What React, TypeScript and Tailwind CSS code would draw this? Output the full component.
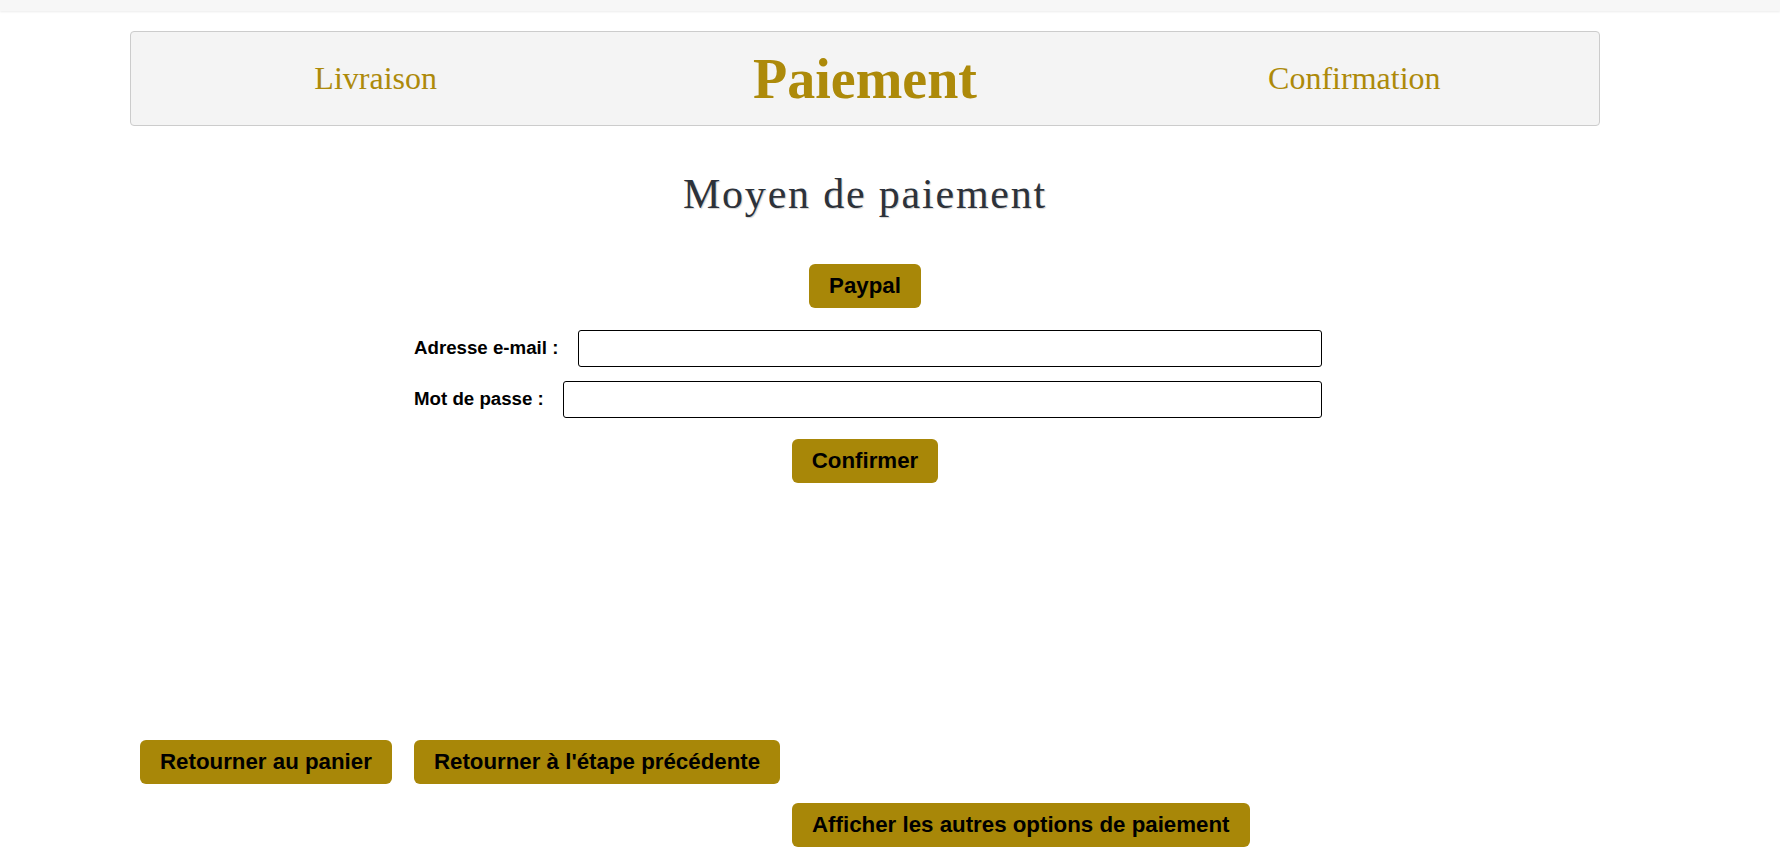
import React from "react";

const steps = [
  { label: "Livraison", active: false },
  { label: "Paiement", active: true },
  { label: "Confirmation", active: false },
];

function GoldButton({ children, className = "" }: { children: React.ReactNode; className?: string }) {
  return (
    <button
      type="button"
      className={`rounded-[6px] bg-[#a88708] px-[20px] py-[9px] text-[22.3px] leading-[26px] font-bold text-black font-['Liberation_Sans',Arial,sans-serif] ${className}`}
    >
      {children}
    </button>
  );
}

export default function App() {
  return (
    <div className="min-h-screen bg-white">
      {/* Top strip */}
      <div className="h-[11px] bg-[#f7f7f7] shadow-[0_1px_2px_rgba(0,0,0,0.08)]" />

      <div className="ml-[130px] w-[1470px]">
        {/* Stepper */}
        <div className="mt-[20px] grid h-[95px] grid-cols-3 items-center rounded-[4px] border border-[#cccccc] bg-[#f4f4f4] font-['Liberation_Serif','Times_New_Roman',serif] text-[#ad8a0a]">
          {steps.map((step) => (
            <div key={step.label} className="text-center">
              {step.active ? (
                <span className="text-[56px] leading-[64px] font-bold">{step.label}</span>
              ) : (
                <span className="text-[32px] leading-[37px]">{step.label}</span>
              )}
            </div>
          ))}
        </div>

        {/* Title */}
        <h1 className="mt-[44px] text-center font-['Liberation_Serif','Times_New_Roman',serif] text-[42px] leading-[48px] tracking-[1.8px] text-[#2d323a] [text-shadow:1px_1px_1px_rgba(0,0,0,0.18)]">
          Moyen de paiement
        </h1>

        {/* Paypal form */}
        <div className="mt-[46px] flex justify-center">
          <GoldButton>Paypal</GoldButton>
        </div>

        <div className="ml-[284px] w-[908px] font-['Liberation_Sans',Arial,sans-serif] text-[18.7px] font-bold text-black">
          <div className="mt-[22px] flex items-center gap-[20px]">
            <label className="whitespace-nowrap">Adresse e-mail :</label>
            <input type="email" className="h-[37px] flex-1 rounded-[3px] border border-black bg-white" />
          </div>
          <div className="mt-[14px] flex items-center gap-[19px]">
            <label className="whitespace-nowrap">Mot de passe :</label>
            <input type="password" className="h-[37px] flex-1 rounded-[3px] border border-black bg-white" />
          </div>
        </div>

        <div className="mt-[21px] flex justify-center">
          <GoldButton>Confirmer</GoldButton>
        </div>

        {/* Navigation */}
        <div className="ml-[10px] mt-[257px] flex gap-[22px]">
          <GoldButton>Retourner au panier</GoldButton>
          <GoldButton>Retourner à l'étape précédente</GoldButton>
        </div>

        <div className="ml-[662px] mt-[19px] flex">
          <GoldButton>Afficher les autres options de paiement</GoldButton>
        </div>
      </div>
    </div>
  );
}
